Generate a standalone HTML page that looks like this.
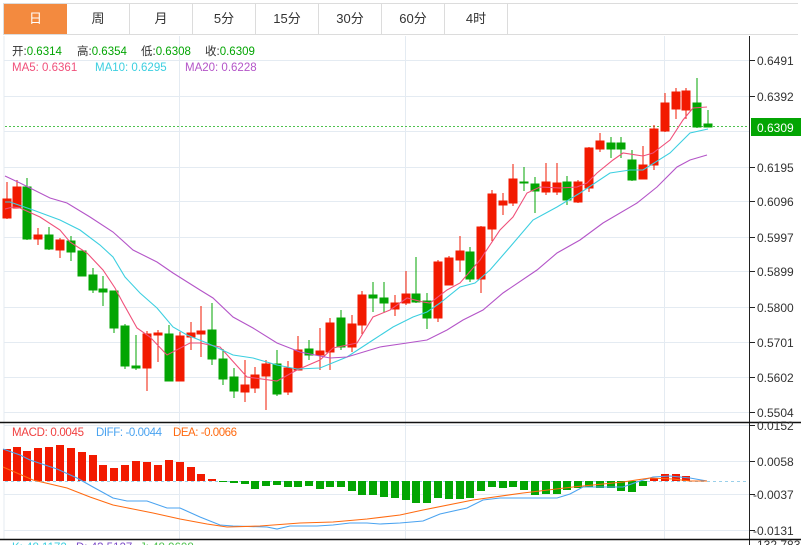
<!DOCTYPE html>
<html><head><meta charset="utf-8"><style>
body{margin:0;background:#fff;width:801px;height:545px;overflow:hidden;font-family:"Liberation Sans","Noto Sans CJK SC",sans-serif;}
.tabs{position:absolute;left:3px;top:3px;height:32px;width:795px;border:1px solid #dcdcdc;border-right:none;box-sizing:border-box;}
.tab{position:absolute;top:0;height:30px;width:63px;line-height:30px;text-align:center;font-size:13px;color:#333;border-right:1px solid #dcdcdc;box-sizing:border-box;}
</style></head><body>
<div class="tabs">
<div class="tab" style="left:0;background:#f38a3f;color:#fff;border-right:none">日</div>
<div class="tab" style="left:63px">周</div>
<div class="tab" style="left:126px">月</div>
<div class="tab" style="left:189px">5分</div>
<div class="tab" style="left:252px">15分</div>
<div class="tab" style="left:315px">30分</div>
<div class="tab" style="left:378px">60分</div>
<div class="tab" style="left:441px">4时</div>
</div>
<svg width="801" height="545" style="position:absolute;left:0;top:0" font-family="Liberation Sans, Noto Sans CJK SC, sans-serif" font-size="12">
<g stroke="#e4ebf2" stroke-width="1">
<line x1="4" y1="36" x2="4" y2="540"/>
<line x1="179.5" y1="36" x2="179.5" y2="540"/>
<line x1="405.5" y1="36" x2="405.5" y2="540"/>
<line x1="664.5" y1="36" x2="664.5" y2="540"/>
<line x1="4" y1="60.5" x2="750" y2="60.5"/><line x1="4" y1="96.5" x2="750" y2="96.5"/>
<line x1="4" y1="131.5" x2="750" y2="131.5"/><line x1="4" y1="167.5" x2="750" y2="167.5"/>
<line x1="4" y1="201.5" x2="750" y2="201.5"/><line x1="4" y1="237.5" x2="750" y2="237.5"/>
<line x1="4" y1="271.5" x2="750" y2="271.5"/><line x1="4" y1="307.5" x2="750" y2="307.5"/>
<line x1="4" y1="342.5" x2="750" y2="342.5"/><line x1="4" y1="377.5" x2="750" y2="377.5"/>
<line x1="4" y1="412.5" x2="750" y2="412.5"/>
<line x1="4" y1="425.5" x2="750" y2="425.5"/><line x1="4" y1="461.5" x2="750" y2="461.5"/>
<line x1="4" y1="494.5" x2="750" y2="494.5"/><line x1="4" y1="530.5" x2="750" y2="530.5"/>
</g>
<line x1="5" y1="126.5" x2="750" y2="126.5" stroke="#4fc24f" stroke-dasharray="2,2"/>
<line x1="5" y1="481.5" x2="750" y2="481.5" stroke="#9ad0ea" stroke-dasharray="3,3"/>
<g stroke-width="1">
<g fill="#f21a00" stroke="#f21a00">
<line x1="7" y1="182" x2="7" y2="219"/><rect x="3" y="199" width="8" height="19"/>
<line x1="17" y1="180" x2="17" y2="208"/><rect x="13" y="187" width="8" height="21"/>
<line x1="38" y1="228" x2="38" y2="245"/><rect x="34" y="235" width="8" height="4"/>
<line x1="60" y1="238" x2="60" y2="258"/><rect x="56" y="240" width="8" height="10"/>
<line x1="147" y1="331" x2="147" y2="391"/><rect x="143" y="334" width="8" height="34"/>
<line x1="158" y1="330" x2="158" y2="362"/><rect x="154" y="333" width="8" height="2"/>
<line x1="180" y1="332" x2="180" y2="381"/><rect x="176" y="336" width="8" height="45"/>
<line x1="191" y1="322" x2="191" y2="350"/><rect x="187" y="333" width="8" height="4"/>
<line x1="201" y1="306" x2="201" y2="357"/><rect x="197" y="331" width="8" height="3"/>
<line x1="245" y1="360" x2="245" y2="402"/><rect x="241" y="385" width="8" height="7"/>
<line x1="255" y1="367" x2="255" y2="393"/><rect x="251" y="375" width="8" height="13"/>
<line x1="266" y1="360" x2="266" y2="410"/><rect x="262" y="364" width="8" height="12"/>
<line x1="288" y1="361" x2="288" y2="395"/><rect x="284" y="368" width="8" height="24"/>
<line x1="298" y1="336" x2="298" y2="370"/><rect x="294" y="350" width="8" height="20"/>
<line x1="320" y1="328" x2="320" y2="370"/><rect x="316" y="351" width="8" height="4"/>
<line x1="330" y1="318" x2="330" y2="370"/><rect x="326" y="323" width="8" height="29"/>
<line x1="352" y1="315" x2="352" y2="352"/><rect x="348" y="324" width="8" height="23"/>
<line x1="362" y1="291" x2="362" y2="334"/><rect x="358" y="295" width="8" height="30"/>
<line x1="395" y1="295" x2="395" y2="316"/><rect x="391" y="303" width="8" height="6"/>
<line x1="406" y1="271" x2="406" y2="305"/><rect x="402" y="294" width="8" height="9"/>
<line x1="438" y1="260" x2="438" y2="322"/><rect x="434" y="262" width="8" height="56"/>
<line x1="449" y1="256" x2="449" y2="285"/><rect x="445" y="258" width="8" height="27"/>
<line x1="460" y1="236" x2="460" y2="272"/><rect x="456" y="251" width="8" height="9"/>
<line x1="481" y1="226" x2="481" y2="293"/><rect x="477" y="227" width="8" height="52"/>
<line x1="492" y1="190" x2="492" y2="241"/><rect x="488" y="194" width="8" height="35"/>
<line x1="503" y1="193" x2="503" y2="215"/><rect x="499" y="201" width="8" height="4"/>
<line x1="513" y1="164" x2="513" y2="206"/><rect x="509" y="179" width="8" height="24"/>
<line x1="546" y1="163" x2="546" y2="195"/><rect x="542" y="182" width="8" height="10"/>
<line x1="557" y1="163" x2="557" y2="195"/><rect x="553" y="183" width="8" height="9"/>
<line x1="578" y1="180" x2="578" y2="203"/><rect x="574" y="182" width="8" height="20"/>
<line x1="589" y1="147" x2="589" y2="192"/><rect x="585" y="148" width="8" height="40"/>
<line x1="600" y1="133" x2="600" y2="152"/><rect x="596" y="141" width="8" height="8"/>
<line x1="643" y1="146" x2="643" y2="179"/><rect x="639" y="165" width="8" height="14"/>
<line x1="654" y1="125" x2="654" y2="170"/><rect x="650" y="129" width="8" height="36"/>
<line x1="665" y1="93" x2="665" y2="132"/><rect x="661" y="103" width="8" height="28"/>
<line x1="676" y1="88" x2="676" y2="119"/><rect x="672" y="92" width="8" height="17"/>
<line x1="686" y1="88" x2="686" y2="119"/><rect x="682" y="91" width="8" height="19"/>
</g>
<g fill="#03a503" stroke="#03a503">
<line x1="27" y1="178" x2="27" y2="240"/><rect x="23" y="187" width="8" height="52"/>
<line x1="49" y1="227" x2="49" y2="250"/><rect x="45" y="235" width="8" height="14"/>
<line x1="71" y1="236" x2="71" y2="261"/><rect x="67" y="241" width="8" height="11"/>
<line x1="82" y1="251" x2="82" y2="276"/><rect x="78" y="251" width="8" height="25"/>
<line x1="93" y1="268" x2="93" y2="293"/><rect x="89" y="275" width="8" height="15"/>
<line x1="103" y1="276" x2="103" y2="306"/><rect x="99" y="289" width="8" height="3"/>
<line x1="114" y1="291" x2="114" y2="333"/><rect x="110" y="291" width="8" height="37"/>
<line x1="125" y1="324" x2="125" y2="369"/><rect x="121" y="326" width="8" height="40"/>
<line x1="136" y1="335" x2="136" y2="370"/><rect x="132" y="366" width="8" height="2"/>
<line x1="169" y1="325" x2="169" y2="381"/><rect x="165" y="334" width="8" height="47"/>
<line x1="212" y1="303" x2="212" y2="365"/><rect x="208" y="330" width="8" height="29"/>
<line x1="223" y1="349" x2="223" y2="385"/><rect x="219" y="359" width="8" height="20"/>
<line x1="234" y1="368" x2="234" y2="398"/><rect x="230" y="377" width="8" height="14"/>
<line x1="277" y1="350" x2="277" y2="396"/><rect x="273" y="364" width="8" height="30"/>
<line x1="309" y1="340" x2="309" y2="360"/><rect x="305" y="349" width="8" height="6"/>
<line x1="341" y1="310" x2="341" y2="350"/><rect x="337" y="318" width="8" height="29"/>
<line x1="373" y1="282" x2="373" y2="312"/><rect x="369" y="295" width="8" height="3"/>
<line x1="384" y1="282" x2="384" y2="313"/><rect x="380" y="298" width="8" height="5"/>
<line x1="416" y1="257" x2="416" y2="303"/><rect x="412" y="294" width="8" height="8"/>
<line x1="427" y1="293" x2="427" y2="329"/><rect x="423" y="301" width="8" height="17"/>
<line x1="470" y1="247" x2="470" y2="282"/><rect x="466" y="252" width="8" height="27"/>
<line x1="524" y1="167" x2="524" y2="191"/><rect x="520" y="182" width="8" height="1"/>
<line x1="535" y1="177" x2="535" y2="213"/><rect x="531" y="184" width="8" height="7"/>
<line x1="567" y1="176" x2="567" y2="205"/><rect x="563" y="182" width="8" height="18"/>
<line x1="611" y1="137" x2="611" y2="158"/><rect x="607" y="143" width="8" height="6"/>
<line x1="621" y1="137" x2="621" y2="158"/><rect x="617" y="143" width="8" height="6"/>
<line x1="632" y1="150" x2="632" y2="181"/><rect x="628" y="160" width="8" height="20"/>
<line x1="697" y1="78" x2="697" y2="128"/><rect x="693" y="103" width="8" height="24"/>
<line x1="708" y1="110" x2="708" y2="127"/><rect x="704" y="124" width="8" height="3"/>
</g>
</g>
<g fill="none" stroke-width="1.1">
<polyline stroke="#f0507a" points="5,209 13,207 20,208 40,217 60,230 70,242 87,253 103,270 115,288 123,303 137,328 150,337 167,355 190,343 200,343 220,347 247,377 277,381 297,370 320,360 333,348 357,343 373,317 390,310 407,298 423,302 430,303 447,290 460,283 480,260 500,230 513,217 527,193 540,187 560,188 577,187 587,183 597,173 613,160 623,153 643,156 653,153 670,140 683,120 693,108 707,107"/>
<polyline stroke="#3ccfe0" points="5,202 10,202 33,210 60,220 80,230 100,245 113,257 125,277 140,293 157,308 173,327 187,335 207,343 233,355 253,358 277,365 297,369 320,368 347,357 373,340 393,327 413,317 427,312 440,303 460,287 475,283 490,270 510,247 533,220 557,207 580,193 610,173 630,170 643,170 670,153 690,133 708,129"/>
<polyline stroke="#b455c8" points="5,176 20,183 50,198 67,203 90,217 113,232 133,250 157,262 173,273 200,290 213,298 233,317 253,328 277,343 300,352 330,358 347,357 380,347 407,343 427,340 447,330 463,320 483,310 503,293 537,270 557,253 580,240 603,223 637,203 657,187 677,167 690,160 707,155"/>
</g>
<g fill="#f21a00">
<rect x="3" y="449" width="8" height="32"/><rect x="13" y="447" width="8" height="34"/><rect x="23" y="451" width="8" height="30"/>
<rect x="34" y="448" width="8" height="33"/><rect x="45" y="447" width="8" height="34"/><rect x="56" y="445" width="8" height="36"/>
<rect x="67" y="448" width="8" height="33"/><rect x="78" y="452" width="8" height="29"/><rect x="89" y="455" width="8" height="26"/>
<rect x="99" y="465" width="8" height="16"/><rect x="110" y="468" width="8" height="13"/><rect x="121" y="465" width="8" height="16"/>
<rect x="132" y="461" width="8" height="20"/><rect x="143" y="462" width="8" height="19"/><rect x="154" y="465" width="8" height="16"/>
<rect x="165" y="460" width="8" height="21"/><rect x="176" y="462" width="8" height="19"/><rect x="187" y="467" width="8" height="14"/>
<rect x="197" y="474" width="8" height="7"/><rect x="208" y="479" width="8" height="2"/>
<rect x="650" y="478" width="8" height="3"/><rect x="661" y="474" width="8" height="7"/><rect x="672" y="474" width="8" height="7"/><rect x="682" y="476" width="8" height="5"/>
</g>
<g fill="#03a503">
<rect x="219" y="481" width="8" height="1"/><rect x="230" y="481" width="8" height="2"/><rect x="241" y="481" width="8" height="3"/>
<rect x="251" y="481" width="8" height="8"/><rect x="262" y="481" width="8" height="5"/><rect x="273" y="481" width="8" height="4"/>
<rect x="284" y="481" width="8" height="6"/><rect x="294" y="481" width="8" height="6"/><rect x="305" y="481" width="8" height="5"/>
<rect x="316" y="481" width="8" height="8"/><rect x="326" y="481" width="8" height="6"/><rect x="337" y="481" width="8" height="6"/>
<rect x="348" y="481" width="8" height="10"/><rect x="358" y="481" width="8" height="14"/><rect x="369" y="481" width="8" height="14"/>
<rect x="380" y="481" width="8" height="16"/><rect x="391" y="481" width="8" height="17"/><rect x="402" y="481" width="8" height="19"/>
<rect x="412" y="481" width="8" height="22"/><rect x="423" y="481" width="8" height="22"/><rect x="434" y="481" width="8" height="17"/>
<rect x="445" y="481" width="8" height="18"/><rect x="456" y="481" width="8" height="18"/><rect x="466" y="481" width="8" height="17"/>
<rect x="477" y="481" width="8" height="10"/><rect x="488" y="481" width="8" height="6"/><rect x="499" y="481" width="8" height="7"/>
<rect x="509" y="481" width="8" height="6"/><rect x="520" y="481" width="8" height="9"/><rect x="531" y="481" width="8" height="14"/>
<rect x="542" y="481" width="8" height="13"/><rect x="553" y="481" width="8" height="13"/><rect x="563" y="481" width="8" height="9"/>
<rect x="574" y="481" width="8" height="7"/><rect x="585" y="481" width="8" height="6"/><rect x="596" y="481" width="8" height="7"/>
<rect x="607" y="481" width="8" height="7"/><rect x="617" y="481" width="8" height="10"/><rect x="628" y="481" width="8" height="11"/>
<rect x="639" y="481" width="8" height="5"/>
</g>
<g fill="none" stroke-width="1.1">
<polyline stroke="#4aa3f0" points="3,449 20,455 30,460 57,469 77,478 93,487 113,498 127,501 147,501 167,508 180,508 200,517 220,525 233,526 267,527 277,529 290,526 317,526 333,525 350,523 367,523 380,524 400,523 423,521 440,514 467,508 483,500 500,498 557,498 570,494 583,487 597,487 623,487 637,482 653,477 670,476 690,478 707,481"/>
<polyline stroke="#ff6a10" points="3,467 33,480 67,488 90,497 113,505 133,509 153,513 180,519 207,524 227,527 260,526 300,523 333,522 367,519 400,515 423,510 473,500 523,493 573,487 623,482 650,478 673,479 690,481 707,481"/>
</g>
<line x1="749.5" y1="36" x2="749.5" y2="545" stroke="#222"/>
<line x1="0" y1="422.5" x2="801" y2="422.5" stroke="#111" stroke-width="1.5"/>
<line x1="0" y1="539.5" x2="801" y2="539.5" stroke="#111" stroke-width="1.5"/>
<g stroke="#222"><line x1="750" y1="60.5" x2="755" y2="60.5"/><line x1="750" y1="96.5" x2="755" y2="96.5"/><line x1="750" y1="167.5" x2="755" y2="167.5"/><line x1="750" y1="201.5" x2="755" y2="201.5"/><line x1="750" y1="237.5" x2="755" y2="237.5"/><line x1="750" y1="271.5" x2="755" y2="271.5"/><line x1="750" y1="307.5" x2="755" y2="307.5"/><line x1="750" y1="342.5" x2="755" y2="342.5"/><line x1="750" y1="377.5" x2="755" y2="377.5"/><line x1="750" y1="412.5" x2="755" y2="412.5"/><line x1="750" y1="425.5" x2="755" y2="425.5"/><line x1="750" y1="461.5" x2="755" y2="461.5"/><line x1="750" y1="494.5" x2="755" y2="494.5"/><line x1="750" y1="530.5" x2="755" y2="530.5"/></g>
<g fill="#333">
<text x="757" y="65">0.6491</text><text x="757" y="101">0.6392</text><text x="757" y="172">0.6195</text><text x="757" y="206">0.6096</text><text x="757" y="242">0.5997</text><text x="757" y="276">0.5899</text><text x="757" y="312">0.5800</text><text x="757" y="347">0.5701</text><text x="757" y="382">0.5602</text><text x="757" y="417">0.5504</text>
<text x="757" y="430">0.0152</text><text x="757" y="466">0.0058</text><text x="753" y="499">-0.0037</text><text x="753" y="535">-0.0131</text><text x="753" y="549">-132.7832</text>
</g>
<rect x="751" y="118" width="50" height="18" fill="#03a503"/>
<text x="757" y="132" fill="#fff">0.6309</text>
<g font-size="11.5">
<text x="12" y="55" fill="#333">开:<tspan fill="#03a503">0.6314</tspan></text>
<text x="77" y="55" fill="#333">高:<tspan fill="#03a503">0.6354</tspan></text>
<text x="141" y="55" fill="#333">低:<tspan fill="#03a503">0.6308</tspan></text>
<text x="205" y="55" fill="#333">收:<tspan fill="#03a503">0.6309</tspan></text>
<text x="12" y="71" fill="#f0507a">MA5: 0.6361</text>
<text x="95" y="71" fill="#3ccfe0">MA10: 0.6295</text>
<text x="185" y="71" fill="#b455c8">MA20: 0.6228</text>
<text x="12" y="436" fill="#f04040" textLength="72">MACD: 0.0045</text>
<text x="96" y="436" fill="#4aa3f0" textLength="66">DIFF: -0.0044</text>
<text x="173" y="436" fill="#ff6a10" textLength="64">DEA: -0.0066</text>
<text x="12" y="551" fill="#3ccfe0">K: 48.1172</text>
<text x="76" y="551" fill="#7d4dc8">D: 43.5127</text>
<text x="140" y="551" fill="#4fc24f">J: 48.9608</text>
</g>
</svg>
</body></html>
